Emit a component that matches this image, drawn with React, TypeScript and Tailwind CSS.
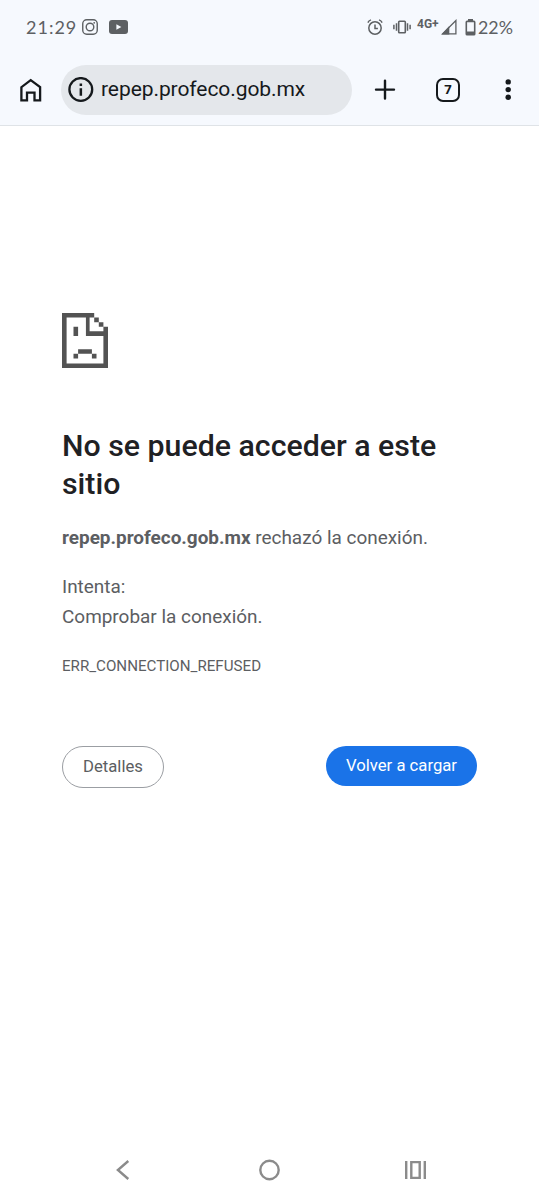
const InstagramIcon = () => (
  <svg className="h-4 w-4" viewBox="0 0 16 16" fill="none" stroke="currentColor" strokeWidth="1.4">
    <rect x="0.75" y="0.75" width="14.5" height="14.5" rx="4" />
    <circle cx="8" cy="8" r="3.8" />
    <circle cx="12.2" cy="3.8" r="0.9" fill="currentColor" stroke="none" />
  </svg>
);

const YoutubeIcon = () => (
  <svg className="h-3.5 w-[19px]" viewBox="0 0 19 14">
    <rect width="19" height="14" rx="3" fill="currentColor" />
    <path d="M7.4 4.2v5.6l5-2.8z" fill="#f6f9fe" />
  </svg>
);

const AlarmIcon = () => (
  <svg className="h-4 w-4" viewBox="0 0 16 16" fill="none" stroke="currentColor" strokeWidth="1.5">
    <circle cx="8" cy="9" r="6.2" />
    <path d="M8 5.6v3.9h2.9M0.9 3.6C1.5 2.2 2.6 1.3 4 0.9M15.1 3.6C14.5 2.2 13.4 1.3 12 0.9" />
  </svg>
);

const VibrateIcon = () => (
  <svg className="h-4 w-[18px]" viewBox="0 0 18 16" fill="none" stroke="currentColor" strokeWidth="1.6">
    <rect x="5.7" y="2.2" width="6.6" height="11.6" rx="0.8" />
    <path d="M3.5 4.2v7.6M14.5 4.2v7.6M0.9 5.8v4.4M17.1 5.8v4.4" strokeWidth="1.5" />
  </svg>
);

const SignalIcon = () => (
  <svg className="h-4 w-4" viewBox="0 0 16 16">
    <path d="M14.9 1.5v13.3H1.6z" fill="none" stroke="currentColor" strokeWidth="1.3" />
    <path d="M8.3 7v8.4H0.6z" fill="currentColor" />
  </svg>
);

const BatteryIcon = () => (
  <svg className="h-[17px] w-[11px]" viewBox="0 0 11 17">
    <path d="M3 0h5v2H3z" fill="currentColor" />
    <rect x="1.3" y="2.4" width="8.4" height="13.4" rx="0.8" fill="none" stroke="currentColor" strokeWidth="1.6" />
    <path d="M1.5 12.5h8V16h-8z" fill="currentColor" />
  </svg>
);

const HomeIcon = () => (
  <svg className="h-6 w-[22px]" viewBox="0 0 22 24" fill="none" stroke="currentColor" strokeWidth="2.3">
    <path d="M1.4 22.3V9.2L10.7 2.2 20.1 9.2v13.1h-5.6v-7.7H7v7.7z" />
  </svg>
);

const InfoIcon = () => (
  <svg className="h-[26px] w-[26px]" viewBox="0 0 26 26">
    <circle cx="12.8" cy="12.5" r="11.4" fill="none" stroke="currentColor" strokeWidth="2.3" />
    <path d="M11.6 11.2h2.5v7.6h-2.5zM11.6 6.5h2.5V9h-2.5z" fill="currentColor" />
  </svg>
);

const SadPageIcon = () => (
  <svg className="h-[55px] w-[46px]" viewBox="0 0 10 12" preserveAspectRatio="none" fill="#535353">
    <path d="M0 0h7v1H6v3h4v1H5.2V1H1v10h8V5h1v7H0z" />
    <path d="M9 3h1v2H9zM7 1h1v1H7zM8 2h1v1H8z" />
    <path d="M2.5 3h1v2h-1zM3.5 7.9h3v1h-3zM2.5 8.9h1v1h-1zM6.5 8.9h1v1h-1z" />
  </svg>
);

const StatusBar = () => (
  <div className="flex h-[54px] items-center justify-between px-[26px] text-[#5d6063]">
    <div className="flex items-center">
      <span className="w-[56px] font-['Lato'] text-[18px] tracking-[1px]">21:29</span>
      <InstagramIcon />
      <span className="ml-[11px]"><YoutubeIcon /></span>
    </div>
    <div className="flex items-center">
      <AlarmIcon />
      <span className="ml-[10px]"><VibrateIcon /></span>
      <span className="ml-[6px] w-[24px] pb-[7px] font-['Roboto'] text-[12px] font-bold">4G+</span>
      <SignalIcon />
      <span className="ml-[8px]"><BatteryIcon /></span>
      <span className="ml-[2px] w-[35px] font-['Lato'] text-[17.8px] whitespace-nowrap">22%</span>
    </div>
  </div>
);

const Toolbar = () => (
  <div className="flex h-[72px] items-center border-b border-[#dfe3e7] pl-[20px] text-[#15191c]">
    <HomeIcon />
    <div className="ml-[19px] flex h-[50px] w-[291px] items-center rounded-full bg-[#e4e7eb] pl-[7px]">
      <InfoIcon />
      <span className="ml-[7px] pt-px font-['Roboto'] text-[21px] tracking-[-0.07px] whitespace-nowrap">
        repep.profeco.gob.mx
      </span>
    </div>
    <svg className="ml-[22px] h-[22px] w-[22px]" viewBox="0 0 22 22" stroke="currentColor" strokeWidth="2.4" strokeLinecap="round">
      <path d="M11 1.6v18M2 10.6h18" />
    </svg>
    <div className="ml-[40px] flex h-6 w-6 items-center justify-center rounded-[7px] border-2 border-current font-['Open_Sans'] text-[13px] font-bold">
      7
    </div>
    <svg className="ml-[45px] h-[22px] w-[6px]" viewBox="0 0 6 22" fill="currentColor">
      <circle cx="3.2" cy="2.9" r="2.7" />
      <circle cx="3.2" cy="10.6" r="2.7" />
      <circle cx="3.2" cy="18.3" r="2.7" />
    </svg>
  </div>
);

const ErrorPage = () => (
  <main className="flex-1 px-[62px] pt-[187px] text-[#5c5e62]">
    <SadPageIcon />
    <h1 className="mt-[59px] text-[30.3px] leading-[38px] font-medium text-[#1f2124]">
      No se puede acceder a este sitio
    </h1>
    <p className="mt-[20px] text-[18.95px] leading-[30px] whitespace-nowrap">
      <strong className="font-bold">repep.profeco.gob.mx</strong> rechazó la conexión.
    </p>
    <div className="mt-[19px] text-[18.95px] leading-[30px]">
      <p>Intenta:</p>
      <p>Comprobar la conexión.</p>
    </div>
    <p className="mt-[24px] text-[15.15px] leading-[20px]">ERR_CONNECTION_REFUSED</p>
    <div className="mt-[70px] flex items-start justify-between">
      <button className="h-[42px] w-[102px] rounded-full border border-[#9b9ea3] text-[16.7px]">Detalles</button>
      <button className="h-10 w-[151px] rounded-full bg-[#1a73e8] text-[16.7px] whitespace-nowrap text-white">
        Volver a cargar
      </button>
    </div>
  </main>
);

const NavigationBar = () => (
  <nav className="flex h-[60px] items-center pl-[116px] text-[#8b8b8b]">
    <svg className="h-[20px] w-[14px]" viewBox="0 0 14 20" fill="none" stroke="currentColor" strokeWidth="2.4">
      <path d="M12.3 1 1.9 10l10.4 9" />
    </svg>
    <svg className="ml-[128px] h-[22px] w-[22px]" viewBox="0 0 22 22" fill="none" stroke="currentColor" strokeWidth="2.4">
      <circle cx="11.5" cy="11" r="9.2" />
    </svg>
    <svg className="ml-[125px] h-[18px] w-[21px]" viewBox="0 0 21 18" fill="none" stroke="currentColor" strokeWidth="2.4">
      <path d="M1.2 0v18M19.8 0v18M6.3 1.1h8.4v15.8H6.3z" />
    </svg>
  </nav>
);

export default function App() {
  return (
    <div className="flex h-[1200px] w-full flex-col overflow-hidden bg-white font-['Roboto',sans-serif]">
      <header className="bg-[#f6f9fe]">
        <StatusBar />
        <Toolbar />
      </header>
      <ErrorPage />
      <NavigationBar />
    </div>
  );
}
